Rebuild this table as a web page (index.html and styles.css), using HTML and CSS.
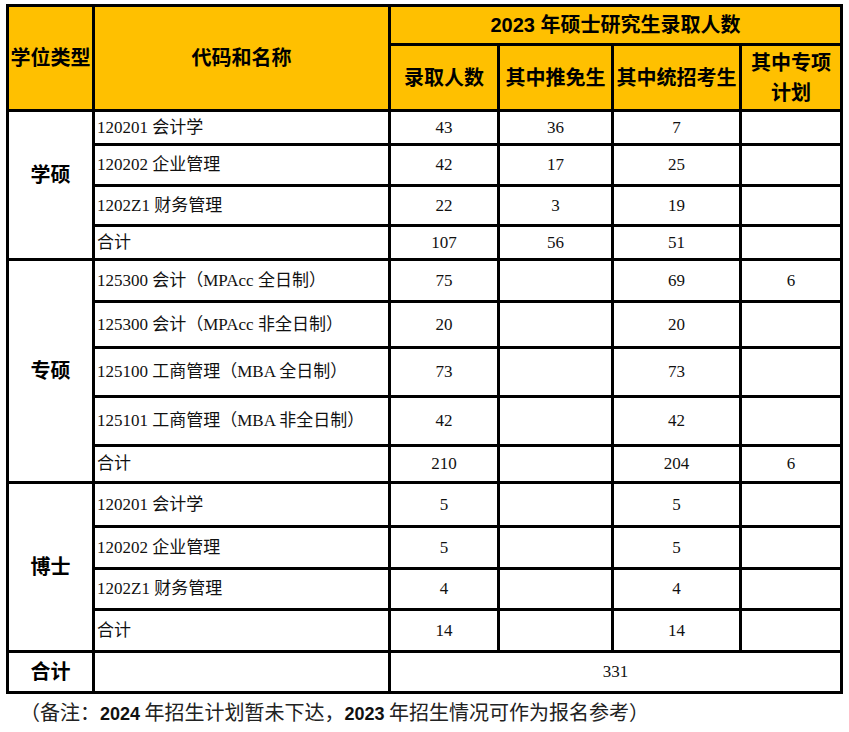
FILE: index.html
```html
<!DOCTYPE html>
<html lang="zh-CN">
<head>
<meta charset="utf-8">
<title>2023年硕士研究生录取人数</title>
<link rel="stylesheet" href="styles.css">
</head>
<body>
<div class="sheet">
  <div class="c hd h-type">学位类型</div>
  <div class="c hd h-code">代码和名称</div>
  <div class="c hd h-title">2023 年硕士研究生录取人数</div>
  <div class="c hd">录取人数</div>
  <div class="c hd">其中推免生</div>
  <div class="c hd">其中统招考生</div>
  <div class="c hd h-wrap">其中专项计划</div>

  <div class="c grp g-xs">学硕</div>
  <div class="c nm">120201 会计学</div><div class="c v">43</div><div class="c v">36</div><div class="c v">7</div><div class="c v"></div>
  <div class="c nm">120202 企业管理</div><div class="c v">42</div><div class="c v">17</div><div class="c v">25</div><div class="c v"></div>
  <div class="c nm">1202Z1 财务管理</div><div class="c v">22</div><div class="c v">3</div><div class="c v">19</div><div class="c v"></div>
  <div class="c nm">合计</div><div class="c v">107</div><div class="c v">56</div><div class="c v">51</div><div class="c v"></div>

  <div class="c grp g-zs">专硕</div>
  <div class="c nm">125300 会计（MPAcc 全日制）</div><div class="c v">75</div><div class="c v"></div><div class="c v">69</div><div class="c v">6</div>
  <div class="c nm">125300 会计（MPAcc 非全日制）</div><div class="c v">20</div><div class="c v"></div><div class="c v">20</div><div class="c v"></div>
  <div class="c nm">125100 工商管理（MBA 全日制）</div><div class="c v">73</div><div class="c v"></div><div class="c v">73</div><div class="c v"></div>
  <div class="c nm">125101 工商管理（MBA 非全日制）</div><div class="c v">42</div><div class="c v"></div><div class="c v">42</div><div class="c v"></div>
  <div class="c nm">合计</div><div class="c v">210</div><div class="c v"></div><div class="c v">204</div><div class="c v">6</div>

  <div class="c grp g-bs">博士</div>
  <div class="c nm">120201 会计学</div><div class="c v">5</div><div class="c v"></div><div class="c v">5</div><div class="c v"></div>
  <div class="c nm">120202 企业管理</div><div class="c v">5</div><div class="c v"></div><div class="c v">5</div><div class="c v"></div>
  <div class="c nm">1202Z1 财务管理</div><div class="c v">4</div><div class="c v"></div><div class="c v">4</div><div class="c v"></div>
  <div class="c nm">合计</div><div class="c v">14</div><div class="c v"></div><div class="c v">14</div><div class="c v"></div>

  <div class="c grp g-total">合计</div>
  <div class="c nm"></div>
  <div class="c v t-sum">331</div>
</div>
<p class="note">（备注：<span class="num">2024</span> 年招生计划暂未下达，<span class="num">2023</span> 年招生情况可作为报名参考）</p>
</body>
</html>
```
FILE: styles.css
```css
html, body {
  margin: 0;
  padding: 0;
  background: #fff;
}

body {
  font-family: "Liberation Serif", "Noto Sans CJK SC", serif;
  color: #111;
}

.sheet {
  margin: 4px 0 0 6px;
  width: 837px;
  box-sizing: border-box;
  display: grid;
  grid-template-columns: 83px 293px 106px 111px 125px 98px;
  grid-template-rows: 36px 63px 31px 38px 37px 31px 39px 43px 46px 46px 34px 41px 39px 38px 39px 38px;
  gap: 3px;
  padding: 3px;
  background: #000;
}

.c {
  background: #fff;
  display: flex;
  align-items: center;
  justify-content: center;
  font-size: 17px;
  line-height: 20px;
  white-space: nowrap;
  overflow: hidden;
}

.hd {
  background: #ffc000;
  font-family: "Liberation Sans", "Noto Sans CJK SC", sans-serif;
  font-weight: 700;
  font-size: 20px;
  color: #000;
  text-align: center;
}

.h-type { grid-column: 1; grid-row: 1 / span 2; }
.h-code { grid-column: 2; grid-row: 1 / span 2; }
.h-title { grid-column: 3 / span 4; grid-row: 1; }

.h-wrap {
  white-space: normal;
  line-height: 30px;
  padding: 0 9px;
}

.grp {
  font-family: "Liberation Sans", "Noto Sans CJK SC", sans-serif;
  font-weight: 700;
  font-size: 20px;
  color: #000;
}

.g-xs { grid-column: 1; grid-row: 3 / span 4; padding-bottom: 20px; }
.g-zs { grid-column: 1; grid-row: 7 / span 5; }
.g-bs { grid-column: 1; grid-row: 12 / span 4; }
.g-total { grid-column: 1; grid-row: 16; }

.nm {
  justify-content: flex-start;
  padding-left: 2px;
}

.t-sum { grid-column: 3 / span 4; }

.note {
  margin: 6px 0 0 20px;
  font-family: "Noto Sans CJK SC", sans-serif;
  font-size: 20px;
  line-height: 24px;
  color: #222;
  white-space: nowrap;
}

.note .num {
  font-family: "Liberation Sans", sans-serif;
  font-weight: 700;
  font-size: 18px;
  color: #111;
}
```
